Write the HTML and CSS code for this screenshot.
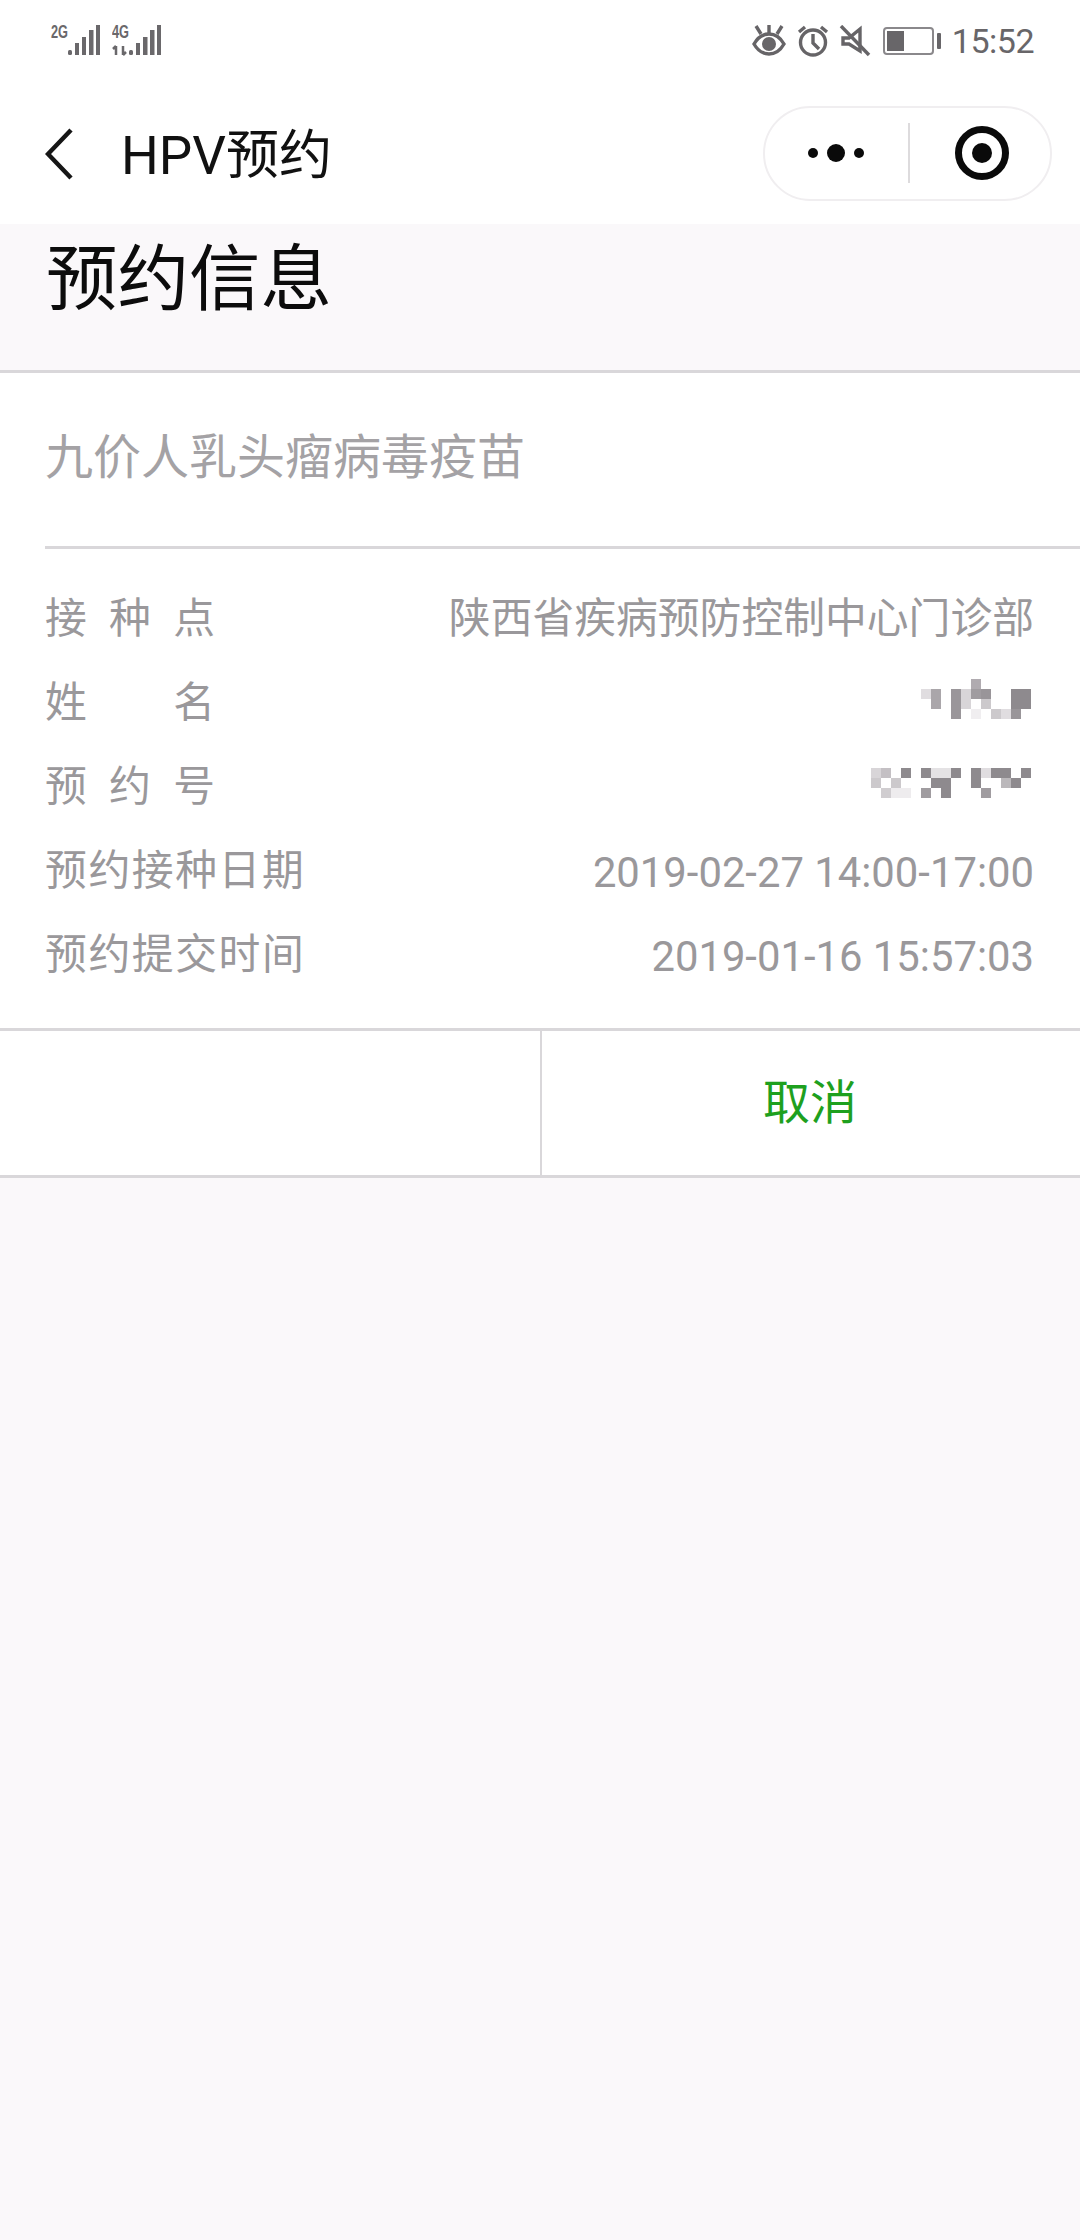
FILE: index.html
```html
<!DOCTYPE html>
<html lang="zh-CN">
<head>
<meta charset="utf-8">
<title>HPV预约</title>
<link rel="stylesheet" href="styles.css">
</head>
<body>
<div class="top">
  <div class="status">
    <div class="signals">
      <svg class="sig sig-a" viewBox="0 -4 52 36"><text x="1" y="14" class="net" textLength="17" lengthAdjust="spacingAndGlyphs">2G</text><rect x="18" y="26" width="4" height="5" rx="1.5"/><rect x="25" y="19" width="4" height="12"/><rect x="32" y="13" width="4" height="18"/><rect x="39" y="6" width="4.5" height="25"/><rect x="46" y="1" width="4" height="30"/></svg>
      <svg class="sig sig-b" viewBox="0 -4 50 36"><text x="0" y="14" class="net" textLength="17" lengthAdjust="spacingAndGlyphs">4G</text><path class="arrows" d="M4 22v9M4 22l-3 3M11 22v9M11 31l3-3"/><rect x="17" y="26" width="4" height="5" rx="1.5"/><rect x="24" y="19" width="4" height="12"/><rect x="31" y="13" width="4.5" height="18"/><rect x="38" y="6" width="4.5" height="25"/><rect x="45" y="1" width="4" height="30"/></svg>
    </div>
    <div class="sys">
      <svg class="ic-eye" viewBox="0 0 34 32"><path class="st" d="M2 19c4-7 9-10 15-10s11 3 15 10c-4 7-9 10-15 10S6 26 2 19z"/><circle class="fl" cx="17" cy="19" r="7"/><path class="st" d="M4 1l5 8M17 0v8M30 1l-5 8"/></svg>
      <svg class="ic-alarm" viewBox="0 0 32 32"><circle class="st" cx="16" cy="17.5" r="12.5"/><path class="st" d="M16 9v9l6 6M2 7l6-5M30 7l-6-5"/></svg>
      <svg class="ic-mute" viewBox="0 0 32 32"><path class="st" d="M4 13h6l11-9v22l-11-7H4z"/><path class="st" d="M2 1l28 29"/></svg>
      <svg class="ic-batt" viewBox="0 0 58 28"><rect class="bt" x="1" y="1" width="49" height="26" rx="3"/><rect class="fl" x="4" y="4" width="17" height="20"/><rect class="fl" x="54" y="6" width="4" height="16" rx="1"/></svg>
      <span class="clock">15:52</span>
    </div>
  </div>
  <div class="nav">
    <svg class="back" viewBox="0 0 30 54"><path d="M26 3L3 27l23 24"/></svg>
    <span class="nav-title">HPV预约</span>
    <div class="capsule">
      <div class="cap-cell cap-cell-more">
        <svg class="more" viewBox="0 0 58 20"><circle cx="5" cy="10" r="5"/><circle cx="28" cy="10" r="9"/><circle cx="51" cy="10" r="5"/></svg>
      </div>
      <div class="cap-sep"></div>
      <div class="cap-cell cap-cell-target">
        <svg class="target" viewBox="0 0 54 54"><circle class="ring" cx="27" cy="27" r="23.5"/><circle cx="27" cy="27" r="10"/></svg>
      </div>
    </div>
  </div>
</div>
<div class="head"><h1>预约信息</h1></div>
<main class="card">
  <div class="vaccine">九价人乳头瘤病毒疫苗</div>
  <div class="rows">
    <div class="row"><span class="lab">接种点</span><span>陕西省疾病预防控制中心门诊部</span></div>
    <div class="row"><span class="lab">姓名</span>
      <svg class="mos mos-name" viewBox="0 0 11 4" shape-rendering="crispEdges">
        <rect x="5" y="0" width="1" height="1" fill="#b0abb0"/><rect x="0" y="1" width="1" height="1" fill="#e0dde0"/><rect x="1" y="1" width="1" height="2" fill="#aaa6aa"/><rect x="3" y="1" width="1" height="3" fill="#9a969a"/><rect x="4" y="1" width="1" height="2" fill="#d8d5d8"/><rect x="5" y="1" width="1" height="1" fill="#a09ca0"/><rect x="6" y="1" width="1" height="1" fill="#999599"/><rect x="6" y="2" width="1" height="1" fill="#ccc9cc"/><rect x="9" y="1" width="2" height="2" fill="#8e8a8e"/><rect x="9" y="3" width="1" height="1" fill="#999599"/><rect x="7" y="3" width="1" height="1" fill="#ccc9cc"/><rect x="8" y="3" width="1" height="1" fill="#e0dde0"/><rect x="5" y="3" width="1" height="1" fill="#f0eef0"/>
      </svg>
    </div>
    <div class="row"><span class="lab">预约号</span>
      <svg class="mos mos-no" viewBox="0 0 16 3" shape-rendering="crispEdges">
        <rect x="0" y="0" width="1" height="1" fill="#d8d5d8"/><rect x="1" y="0" width="1" height="1" fill="#c4c0c4"/><rect x="3" y="0" width="1" height="1" fill="#8e8a8e"/><rect x="5" y="0" width="1" height="1" fill="#8e8a8e"/><rect x="6" y="0" width="2" height="1" fill="#e4e2e4"/><rect x="8" y="0" width="1" height="1" fill="#8e8a8e"/><rect x="10" y="0" width="1" height="2" fill="#8e8a8e"/><rect x="11" y="0" width="1" height="1" fill="#e0dde0"/><rect x="12" y="0" width="2" height="1" fill="#8e8a8e"/><rect x="15" y="0" width="1" height="1" fill="#8e8a8e"/>
        <rect x="0" y="1" width="1" height="1" fill="#ccc9cc"/><rect x="2" y="1" width="1" height="1" fill="#ccc9cc"/><rect x="6" y="1" width="2" height="1" fill="#8e8a8e"/><rect x="13" y="1" width="1" height="1" fill="#bbb8bb"/><rect x="14" y="1" width="1" height="1" fill="#8e8a8e"/>
        <rect x="1" y="2" width="1" height="1" fill="#d0cdd0"/><rect x="2" y="2" width="2" height="1" fill="#eeecee"/><rect x="5" y="2" width="1" height="1" fill="#a09ca0"/><rect x="7" y="2" width="1" height="1" fill="#8e8a8e"/><rect x="11" y="2" width="1" height="1" fill="#a09ca0"/>
      </svg>
    </div>
    <div class="row"><span class="wide">预约接种日期</span><span class="num">2019-02-27 14:00-17:00</span></div>
    <div class="row"><span class="wide">预约提交时间</span><span class="num">2019-01-16 15:57:03</span></div>
  </div>
  <div class="actions">
    <div class="act act-empty"></div>
    <div class="act act-cancel">取消</div>
  </div>
</main>
</body>
</html>
```
FILE: styles.css
```css
* { box-sizing: border-box; }
html, body { margin: 0; padding: 0; }
body {
  width: 1080px;
  height: 2240px;
  background: #faf8fa;
  font-family: Roboto, "Noto Sans CJK SC", sans-serif;
  overflow: hidden;
}
.top { background: #fff; height: 224px; }
.status {
  height: 84px;
  display: flex;
  align-items: flex-start;
  justify-content: space-between;
  padding: 20px 46px 0 50px;
}
.signals { display: flex; }
.sig { height: 36px; fill: #6a686b; display: block; }
.sig-a { width: 52px; }
.sig-b { width: 50px; margin-left: 10px; }
.net { font: bold 18px "Liberation Sans", sans-serif; fill: #6a686b; }
.arrows { fill: none; stroke: #6a686b; stroke-width: 2.5; }
.sys { display: flex; align-items: center; margin-top: 4px; height: 34px; }
.sys svg { display: block; }
.st { fill: none; stroke: #666467; stroke-width: 3.4; }
.fl { fill: #686669; }
.bt { fill: none; stroke: #8a888b; stroke-width: 2; }
.ic-eye { width: 34px; height: 32px; }
.ic-alarm { width: 32px; height: 32px; margin-left: 11px; }
.ic-mute { width: 32px; height: 32px; margin-left: 10px; }
.ic-batt { width: 58px; height: 28px; margin-left: 12px; }
.clock { font-size: 34px; letter-spacing: -0.5px; line-height: 34px; color: #686669; margin-left: 11px; }
.nav { height: 140px; display: flex; align-items: center; padding: 0 28px 0 45px; }
.back { width: 30px; height: 54px; display: block; }
.back path { fill: none; stroke: #161616; stroke-width: 4.5; }
.nav-title { font-size: 53px; color: #111; margin-left: 46px; line-height: 60px; padding-top: 3px; }
.capsule {
  margin-left: auto;
  width: 289px;
  height: 95px;
  border: 2px solid #f0eef0;
  border-radius: 48px;
  display: flex;
  align-items: center;
  position: relative;
  top: -1px;
}
.cap-cell { display: flex; align-items: center; justify-content: center; }
.cap-cell-more { width: 143px; }
.cap-cell-target { flex: 1; padding-left: 4px; }
.cap-sep { width: 2px; height: 60px; background: #dddbdd; }
.more { width: 58px; height: 20px; fill: #0a0a0a; display: block; }
.target { width: 54px; height: 54px; fill: #0a0a0a; display: block; }
.target .ring { fill: none; stroke: #0a0a0a; stroke-width: 7; }
.head { height: 149px; border-bottom: 3px solid #d9d7da; padding: 3px 0 0 46px; }
.head h1 { margin: 0; font-size: 71.5px; font-weight: 400; line-height: 106px; color: #0c0c0c; }
.card { background: #fff; }
.vaccine {
  margin-left: 45px;
  height: 176px;
  border-bottom: 3px solid #d9d7da;
  padding-top: 50px;
  font-size: 48px;
  line-height: 70px;
  color: #a4a2a5;
}
.rows { padding: 24px 46px 35px 45px; }
.row {
  height: 84px;
  display: flex;
  align-items: center;
  justify-content: space-between;
  font-size: 41.8px;
  color: #9a989b;
}
.lab { width: 170px; text-align: justify; text-align-last: justify; }
.wide { letter-spacing: 1.6px; }
.num { padding-top: 10px; }
.mos { display: block; margin-right: 3px; }
.mos-name { width: 110px; height: 40px; }
.mos-no { width: 160px; height: 30px; }
.actions {
  display: flex;
  height: 150px;
  border-top: 3px solid #d9d7da;
  border-bottom: 3px solid #d9d7da;
}
.act { display: flex; align-items: center; justify-content: center; }
.act-empty { width: 542px; border-right: 2px solid #d9d7da; }
.act-cancel { flex: 1; font-size: 47px; color: #1ea01e; padding: 0 2px 10px 0; }
```
